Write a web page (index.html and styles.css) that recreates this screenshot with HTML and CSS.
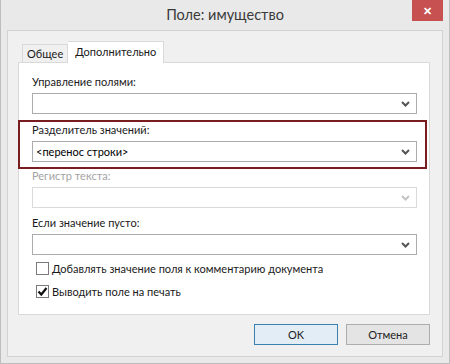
FILE: index.html
```html
<!DOCTYPE html>
<html lang="ru">
<head>
  <meta charset="utf-8">
  <title>Поле: имущество</title>
  <link rel="stylesheet" href="styles.css">
</head>
<body>
  <div class="window">
    <div class="titlebar">
      <span></span>
      <span class="title">Поле: имущество</span>
      <a href="#" class="close">&#x2715;</a>
    </div>
    <div class="client">
      <div class="tabs">
        <span class="tab">Общее</span>
        <span class="tab active">Дополнительно</span>
      </div>
      <div class="panel">
        <div class="field">
          <label>Управление полями:</label>
          <div class="combo">
            <span></span>
            <svg class="arrow" width="9" height="6" viewBox="0 0 9 6"><path d="M1 1 L4.5 4.5 L8 1" fill="none" stroke="currentColor" stroke-width="2"/></svg>
          </div>
        </div>
        <div class="field marked">
          <label>Разделитель значений:</label>
          <div class="combo">
            <span>&lt;перенос строки&gt;</span>
            <svg class="arrow" width="9" height="6" viewBox="0 0 9 6"><path d="M1 1 L4.5 4.5 L8 1" fill="none" stroke="currentColor" stroke-width="2"/></svg>
          </div>
        </div>
        <div class="field off">
          <label>Регистр текста:</label>
          <div class="combo">
            <span></span>
            <svg class="arrow" width="9" height="6" viewBox="0 0 9 6"><path d="M1 1 L4.5 4.5 L8 1" fill="none" stroke="currentColor" stroke-width="2"/></svg>
          </div>
        </div>
        <div class="field">
          <label>Если значение пусто:</label>
          <div class="combo">
            <span></span>
            <svg class="arrow" width="9" height="6" viewBox="0 0 9 6"><path d="M1 1 L4.5 4.5 L8 1" fill="none" stroke="currentColor" stroke-width="2"/></svg>
          </div>
        </div>
        <div class="check">
          <span class="box"></span>
          <span>Добавлять значение поля к комментарию документа</span>
        </div>
        <div class="check">
          <span class="box">
            <svg width="11" height="11" viewBox="0 0 11 11"><path d="M1.5 5.5 L4.3 8.5 L9.5 2" fill="none" stroke="#111" stroke-width="2.2"/></svg>
          </span>
          <span>Выводить поле на печать</span>
        </div>
      </div>
      <div class="buttons">
        <a href="#" class="btn default">OK</a>
        <a href="#" class="btn">Отмена</a>
      </div>
    </div>
  </div>
</body>
</html>
```

FILE: styles.css
```css
*{
  margin: 0;
  padding: 0;
  box-sizing: border-box;
}

body{
  font-family: Lato, "Noto Sans", sans-serif;
  font-size: 11px;
  color: #1a1a1a;
  background: #e9e9e9;
}

a{
  text-decoration: none;
  color: inherit;
}

.window{
  width: 450px;
  height: 364px;
  background: #e9e9e9;
  border: 1px solid #bdbdbd;
  border-top: none;
  padding: 0 6px 6px 6px;
  display: flex;
  flex-direction: column;
}

.titlebar{
  height: 30px;
  display: grid;
  grid-template-columns: 1fr auto 1fr;
  align-items: start;
}

.title{
  font-size: 14.5px;
  line-height: 30px;
  color: #3a3a3a;
}

.close{
  justify-self: end;
  width: 31px;
  height: 21px;
  background: #c75050;
  color: #fff;
  font-size: 11px;
  font-weight: bold;
  display: flex;
  align-items: center;
  justify-content: center;
}

.client{
  flex: 1;
  background: #f0f0f0;
  border: 1px solid #d2d2d2;
  padding: 10px 12px 0 10px;
}

.tabs{
  display: flex;
  align-items: flex-end;
  height: 21px;
  padding-left: 4px;
}

.tab{
  height: 18px;
  line-height: 17px;
  padding: 0 4px;
  border: 1px solid #d9d9d9;
  border-bottom: none;
  background: #f0f0f0;
}

.tab.active{
  height: 22px;
  margin-bottom: -1px;
  background: #fff;
  padding: 0 7px;
  line-height: 19px;
  border-left: none;
}

.panel{
  height: 253px;
  background: #fff;
  border: 1px solid #d9d9d9;
  padding: 11px 12px 0 13px;
}

.field{
  margin-bottom: 7px;
}

.field label{
  display: block;
  line-height: 15px;
  margin-bottom: 4px;
}

.combo{
  height: 21px;
  border: 1px solid #acacac;
  display: flex;
  align-items: center;
  justify-content: space-between;
  padding: 0 6px 0 3px;
  color: #000;
}

.arrow{
  color: #555;
}

.marked{
  margin: -1px -10px -1px -14px;
  border: 2px solid #7a1d20;
  padding: 0 8px 5px 12px;
}

.off label{
  color: #a3a3a3;
}

.off .combo{
  border-color: #dadada;
}

.off .arrow{
  color: #c4c4c4;
}

.check{
  display: flex;
  align-items: center;
  gap: 3px;
  margin: 7px 0 0 4px;
  line-height: 13px;
}

.check + .check{
  margin-top: 10px;
}

.box{
  width: 13px;
  height: 13px;
  border: 1px solid #7a7a7a;
  background: #fff;
  display: flex;
  align-items: center;
  justify-content: center;
}

.buttons{
  display: flex;
  justify-content: flex-end;
  gap: 8px;
  margin-top: 9px;
}

.btn{
  width: 84px;
  height: 21px;
  border: 1px solid #adadad;
  background: #e4e4e4;
  display: flex;
  align-items: center;
  justify-content: center;
  color: #222;
}

.btn.default{
  border-color: #3c7fb1;
  background: #e3edf6;
}
```
